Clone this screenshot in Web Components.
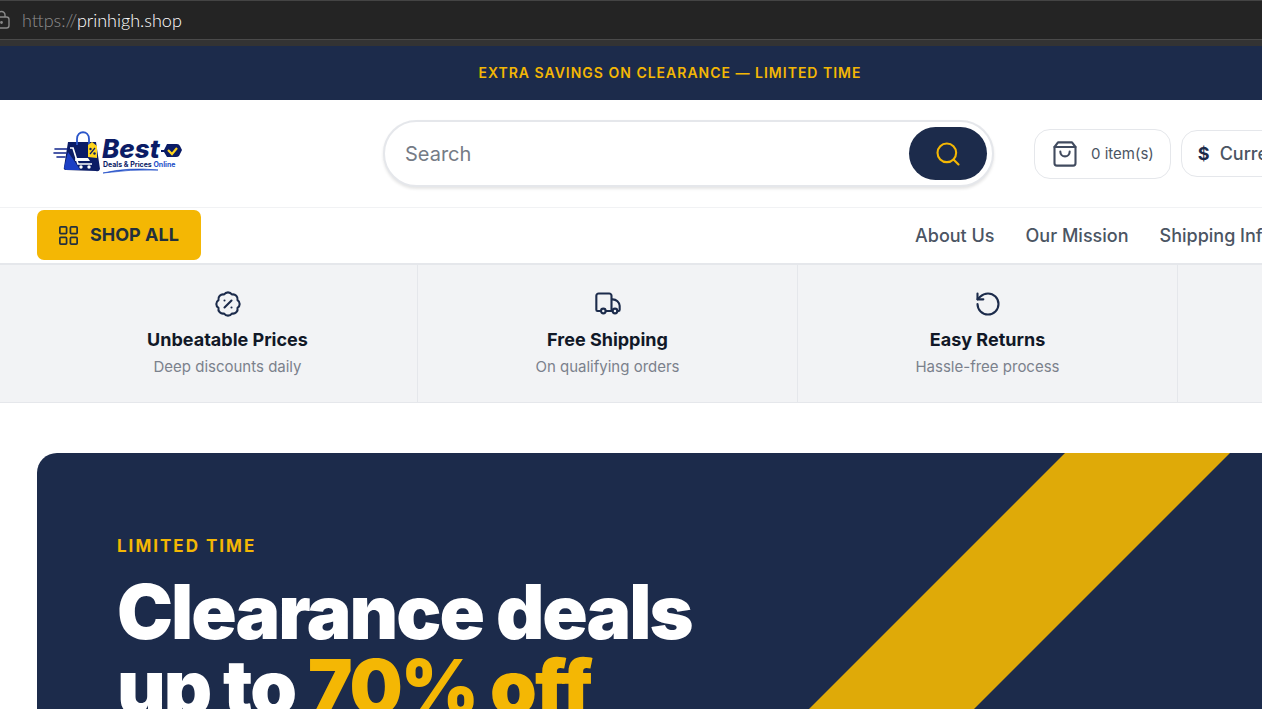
<!DOCTYPE html>
<html lang="en">
<head>
<meta charset="utf-8">
<title>Best Deals &amp; Prices Online</title>
<style>
  :root { --navy:#1c2b4b; --gold:#f4b704; --line:#e5e7eb; --ink:#111827; --slate:#4b5563; --muted:#7b818c; }
  body { margin:0; background:#fff; font-family:Inter,"Liberation Sans",sans-serif; color:var(--ink); }
</style>
</head>
<body>
<shop-page></shop-page>
<script>
const define = (name, html) => {
  const t = document.createElement('template');
  t.innerHTML = html;
  customElements.define(name, class extends HTMLElement {
    constructor() {
      super();
      this.attachShadow({ mode: 'open' }).append(t.content.cloneNode(true));
    }
  });
};

define('address-bar', `
<style>
  :host { display:flex; align-items:center; box-sizing:border-box; height:46px; padding-bottom:8px; gap:12px;
    border-top:1px solid #444; background:linear-gradient(#242424 0 38px,#4a4a4a 38px 39px,#333 39px);
    color:#8e8e8e; font:300 18px/24px Lato,sans-serif; }
  svg { width:20px; height:20px; margin-left:-10px; flex:none; }
  b { color:#fff; font-weight:300; }
</style>
<svg viewBox="0 0 20 20" fill="none" stroke="#8a8a8a" stroke-width="1.4"><rect x="3" y="7" width="16" height="11" rx="2.5"/><path d="M8 7V5a3.5 3.5 0 0 1 7 0v2"/><circle cx="11.500" cy="12.500" r=".7" fill="#8a8a8a"/></svg>
<span>https://<b>prinhigh.shop</b></span>`);

define('promo-banner', `
<style>
  :host { display:block; padding:17px 0 17px 78px; background:var(--navy); color:var(--gold);
    font-size:14px; line-height:20px; font-weight:600; letter-spacing:1px; text-align:center; }
</style><slot></slot>`);

define('brand-logo', `
<style>:host { display:block; } a,svg { display:block; } svg { width:130px; height:46px; }</style>
<a href="#" aria-label="Best Deals and Prices Online">
<svg viewBox="0 0 130 46">
  <path d="M15 11H43L47 38Q46 41 43 40L13 39Q10 39 11 36Z" fill="#0b1c66"/>
  <path d="M11 37L15 21L24 34L27 39L13 39Z" fill="#1c3fc4"/>
  <g fill="none" stroke="#12268c" stroke-width="1.6" stroke-linecap="round"><path d="M1 22H13M4 26H12M2 18H14"/></g>
  <path d="M24 14V8C24 -1 36 -1 36 8V14" fill="none" stroke="#2a55c9" stroke-width="1.8"/>
  <path d="M17 17H20L25 33H39M23 27V30M28 27V30M33 27V30" fill="none" stroke="#fff" stroke-width="1.700"/>
  <path d="M23 27H35L37 30H24Z" fill="#fff"/>
  <circle cx="28" cy="36" r="1.700" fill="#fff"/><circle cx="36" cy="36" r="1.700" fill="#fff"/>
  <path d="M35 14L39 11L44 15V27L35 26Z" fill="#ffd51e"/>
  <path d="M42 17L37 23" stroke="#0b1c66" stroke-width="1.200"/><circle cx="37.500" cy="18" r="1.200" fill="#0b1c66"/><circle cx="41.500" cy="22.500" r="1.200" fill="#0b1c66"/>
  <text x="49" y="27" font-family="Inter,sans-serif" font-size="26" font-weight="800" font-style="italic" fill="#0b1c66">Best</text>
  <path d="M108 19H111L114 13H124Q126 13 127 15L129 19L126 25Q125 26 123 26H114L111 21H108Z" fill="#0b1c66"/>
  <path d="M115 19L119 23L124 17" fill="none" stroke="#ffd51e" stroke-width="2.200"/>
  <text x="50" y="36" font-family="Inter,sans-serif" font-size="7" font-weight="700" fill="#0b1c66">Deals &amp; Prices <tspan fill="#2450c8">Online</tspan></text>
  <path d="M50 42Q75 36 105 39Q78 38 50 42Z" fill="#2450c8" stroke="#2450c8" stroke-width=".7"/>
</svg></a>`);

define('search-box', `
<style>
  :host { display:block; }
  form { display:flex; box-sizing:border-box; height:67px; padding:5px 5px 5px 20px; border:2px solid var(--line);
    border-radius:34px; background:#fff; box-shadow:0 2px 3px #0000001a; }
  input { flex:1; min-width:0; border:0; outline:0; background:none; padding:0; font:400 20px/24px Inter,sans-serif; color:var(--ink); }
  input::placeholder { color:#757b86; opacity:1; }
  button { width:78px; border:0; border-radius:27px; background:var(--navy); color:var(--gold); display:grid; place-items:center; padding:0; }
  svg { width:28px; height:28px; }
</style>
<form><input type="search" aria-label="Search" placeholder="Search">
<button type="button" aria-label="Submit search"><svg viewBox="0 0 24 24" fill="none" stroke="currentColor" stroke-width="1.8" stroke-linecap="round"><circle cx="11" cy="11" r="8"/><path d="m21 21-4.300-4.300"/></svg></button></form>`);

define('pill-button', `
<style>
  :host { display:block; }
  button { display:flex; align-items:center; box-sizing:border-box; gap:var(--pill-gap,10px); height:var(--pill-height,47px); padding:0 16px;
    border:1px solid var(--line); border-radius:16px; background:#fff; color:var(--slate); white-space:nowrap;
    font:var(--pill-font,500 18px/24px Inter,sans-serif); }
</style><button type="button"><slot></slot></button>`);

define('site-header', `
<style>
  :host { display:block; border-bottom:1px solid #f1f2f4; }
  .row { display:grid; grid-template-columns:346px 611px auto 1fr; align-items:center; box-sizing:border-box;
    min-width:1520px; height:107px; padding-left:37px; }
  brand-logo { padding-left:16px; }
  .cart { margin-left:40px; --pill-height:50px; --pill-gap:12px; --pill-font:400 15px/20px Inter,sans-serif; }
  .currency { margin-left:10px; }
  .cart svg { width:28px; height:28px; }
  strong { color:var(--navy); font-weight:700; }
</style>
<div class="row">
  <brand-logo></brand-logo>
  <search-box></search-box>
  <pill-button class="cart"><svg viewBox="0 0 24 24" fill="none" stroke="#414b5f" stroke-width="1.800" stroke-linecap="round" stroke-linejoin="round"><path d="M6 2 3 6v14a2 2 0 0 0 2 2h14a2 2 0 0 0 2-2V6l-3-4Z"/><path d="M3 6h18M16 10a4 4 0 0 1-8 0"/></svg><span>0 item(s)</span></pill-button>
  <pill-button class="currency"><strong>$</strong><span>Currency</span></pill-button>
</div>`);

define('site-nav', `
<style>
  :host { display:block; border-bottom:2px solid var(--line); }
  nav { display:grid; grid-template-columns:878px auto; align-items:center; height:54px; padding:0 0 1px 37px; }
  button { justify-self:start; display:flex; align-items:center; gap:10px; min-width:164px; height:50px; padding:0 20px; border:0; border-radius:7px;
    background:var(--gold); color:#23303d; font:700 18px/24px Inter,sans-serif; }
  svg { width:23px; height:23px; }
  .links { display:flex; gap:31px; padding-top:2px; }
  a { color:var(--slate); text-decoration:none; white-space:nowrap; font-size:18px; line-height:24px; font-weight:500; }
</style>
<nav>
  <button type="button"><svg viewBox="0 0 24 24" fill="none" stroke="currentColor" stroke-width="1.800" stroke-linejoin="round"><rect x="3" y="3" width="7" height="7" rx="1"/><rect x="14" y="3" width="7" height="7" rx="1"/><rect x="14" y="14" width="7" height="7" rx="1"/><rect x="3" y="14" width="7" height="7" rx="1"/></svg>SHOP ALL</button>
  <div class="links"><a href="#">About Us</a><a href="#">Our Mission</a><a href="#">Shipping Info</a></div>
</nav>`);

define('feature-card', `
<style>
  :host { display:flex; flex-direction:column; align-items:center; box-sizing:border-box; padding:25px 0; border-right:1px solid var(--line); }
  ::slotted(svg) { width:28px; height:28px; fill:none; stroke:var(--navy); stroke-width:1.8; stroke-linecap:round; stroke-linejoin:round; }
  h3 { margin:10px 0 4px; font-size:18px; line-height:24px; font-weight:700; }
  p { margin:0; color:var(--muted); font-size:15px; line-height:22px; }
</style><slot name="icon"></slot><h3><slot name="title"></slot></h3><p><slot></slot></p>`);

define('feature-strip', `
<style>
  :host { display:block; background:#f2f3f5; border-bottom:1px solid var(--line); }
  .grid { display:grid; grid-template-columns:repeat(4,380px); margin-left:38px; height:137px; }
</style>
<div class="grid">
  <feature-card><svg slot="icon" viewBox="0 0 24 24"><path d="M3.850 8.620a4 4 0 0 1 4.780-4.770 4 4 0 0 1 6.740 0 4 4 0 0 1 4.780 4.780 4 4 0 0 1 0 6.740 4 4 0 0 1-4.770 4.780 4 4 0 0 1-6.750 0 4 4 0 0 1-4.780-4.770 4 4 0 0 1 0-6.760Z"/><path d="m15 9-6 6M9 9h.01M15 15h.01"/></svg><span slot="title">Unbeatable Prices</span>Deep discounts daily</feature-card>
  <feature-card><svg slot="icon" viewBox="0 0 24 24"><path d="M15 18V5a2 2 0 0 0-2-2H4a2 2 0 0 0-2 2v12a1 1 0 0 0 1 1h2M15 18H10M20 18h1a1 1 0 0 0 1-1v-3.500a6 6 0 0 0-6-5.500h-1"/><circle cx="18" cy="18" r="2"/><circle cx="8" cy="18" r="2"/></svg><span slot="title">Free Shipping</span>On qualifying orders</feature-card>
  <feature-card><svg slot="icon" viewBox="0 0 24 24"><path d="M3 12a9 9 0 1 0 9-9 9.750 9.750 0 0 0-6.740 2.740L3 8"/><path d="M3 3v5h5"/></svg><span slot="title">Easy Returns</span>Hassle-free process</feature-card>
</div>`);

define('hero-panel', `
<style>
  :host { display:block; position:relative; overflow:hidden; box-sizing:border-box; margin:50px 0 0 37px; min-height:400px; padding:80px;
    min-width:1520px; border-radius:20px; background:var(--navy); color:#fff; }
  svg { position:absolute; inset:0; width:100%; height:100%; }
  .copy { position:relative; }
  p { margin:0; color:var(--gold); font-size:17px; line-height:26px; font-weight:700; letter-spacing:2px; }
  h1 { margin:15px 0 0; font-size:75px; line-height:75px; font-weight:900; letter-spacing:-2px; }
  em { color:var(--gold); font-style:normal; }
</style>
<svg aria-hidden="true"><path d="M1028 0H1193L693 500H528Z" fill="#dfaa08"/></svg>
<div class="copy"><p>LIMITED TIME</p><h1>Clearance deals<br>up to <em>70% off</em></h1></div>`);

define('shop-page', `
<style>:host { display:block; height:100vh; overflow:hidden; }</style>
<address-bar></address-bar>
<promo-banner>EXTRA SAVINGS ON CLEARANCE — LIMITED TIME</promo-banner>
<site-header></site-header>
<site-nav></site-nav>
<feature-strip></feature-strip>
<hero-panel></hero-panel>`);
</script>
</body>
</html>
